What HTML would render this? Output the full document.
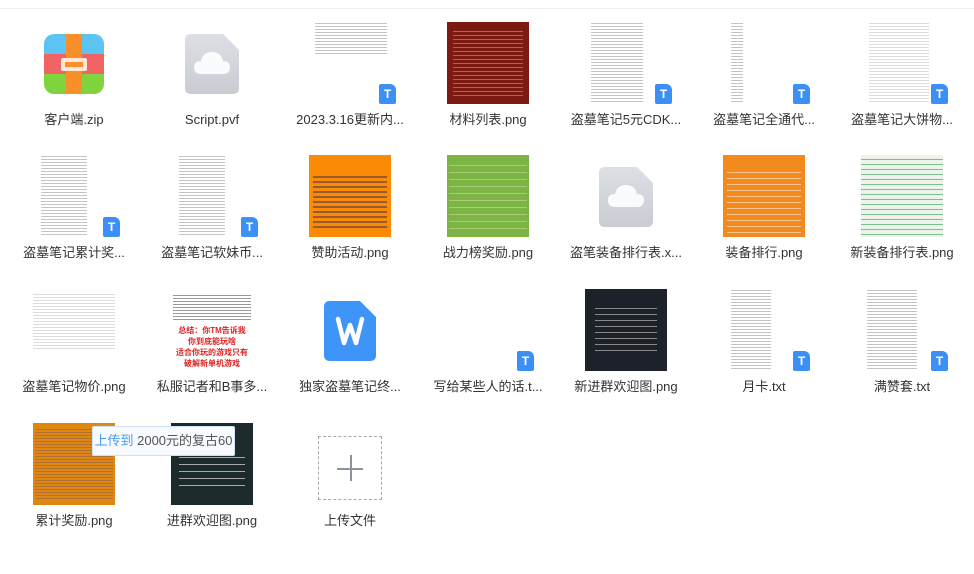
<!DOCTYPE html>
<html><head><meta charset="utf-8"><style>
body{margin:0;width:974px;height:574px;background:#fff;position:relative;overflow:hidden;font-family:"Liberation Sans","Noto Sans CJK SC",sans-serif}
.top{position:absolute;left:0;top:8px;width:974px;height:1px;background:#eceef2}
.c{position:absolute;width:138px;height:120px}
.t{position:absolute;left:28px;top:0;width:82px;height:82px;overflow:hidden}
.l{position:absolute;left:0;top:89px;width:138px;text-align:center;font-size:13px;color:#333;line-height:18px;white-space:nowrap}
.txt{background:repeating-linear-gradient(#fff 0 1px,#c4c4c4 1px 2px,#fff 2px 3px)}
.badge{position:absolute;left:346px;top:62px;width:17px;height:20px;background:#3b8ff5;border-radius:2px 6px 2px 2px;color:#fff;font-size:12px;font-weight:bold;text-align:center;line-height:20px}
.tip{position:absolute;left:92px;top:426px;width:141px;height:28px;border:1px solid #cfe3f8;background:#f7fafe;border-radius:2px;font-size:13px;line-height:28px;color:#555;text-align:center;white-space:nowrap}
</style></head><body>
<div class="top"></div>

<!-- row 0 -->
<div class="c" style="left:5px;top:22px">
 <div style="position:absolute;left:39px;top:12px;width:60px;height:60px;border-radius:10px;overflow:hidden">
  <div style="height:20px;background:#5cc4f2"></div><div style="height:20px;background:#f06464"></div><div style="height:20px;background:#7fd33c"></div>
  <div style="position:absolute;left:22px;top:0;width:16px;height:60px;background:#f7902a"></div>
  <div style="position:absolute;left:17px;top:24px;width:26px;height:13px;background:#fde8d8;border-radius:2px"></div>
  <div style="position:absolute;left:21px;top:28px;width:18px;height:5px;background:#f7902a"></div>
 </div>
 <div class="l">客户端.zip</div></div>
<div class="c" style="left:143px;top:22px">
 <svg style="position:absolute;left:42px;top:12px" width="54" height="60"><defs><linearGradient id="g" x1="0" y1="0" x2="0" y2="1"><stop offset="0" stop-color="#dcdfe4"/><stop offset="1" stop-color="#c9ccd3"/></linearGradient></defs><path d="M6 0H38L54 16V54Q54 60 48 60H6Q0 60 0 54V6Q0 0 6 0Z" fill="url(#g)"/><path d="M16 40Q9 40 9 33Q9 27 16 27Q18 18 27 18Q36 18 38 27Q45 27 45 33Q45 40 38 40Z" fill="#fafbfc"/></svg>
 <div class="l">Script.pvf</div></div>
<div class="c" style="left:281px;top:22px"><div class="t txt" style="top:0;height:34px;width:72px;left:34px"></div><div class="badge" style="left:98px">T</div><div class="l">2023.3.16更新内...</div></div>
<div class="c" style="left:419px;top:22px"><div class="t" style="background:#7a1a12"><div style="margin:6px 6px;height:68px;background:repeating-linear-gradient(#7a1a12 0 3px,#a76a4a 3px 4px)"></div></div><div class="l">材料列表.png</div></div>
<div class="c" style="left:557px;top:22px"><div class="t txt" style="left:34px;width:52px"></div><div class="badge" style="left:98px">T</div><div class="l">盗墓笔记5元CDK...</div></div>
<div class="c" style="left:695px;top:22px"><div class="t txt" style="left:36px;width:12px"></div><div class="badge" style="left:98px">T</div><div class="l">盗墓笔记全通代...</div></div>
<div class="c" style="left:833px;top:22px"><div class="t txt" style="left:36px;width:60px;opacity:.6"></div><div class="badge" style="left:98px">T</div><div class="l">盗墓笔记大饼物...</div></div>

<!-- row 1 -->
<div class="c" style="left:5px;top:155px"><div class="t txt" style="left:36px;width:46px"></div><div class="badge" style="left:98px">T</div><div class="l">盗墓笔记累计奖...</div></div>
<div class="c" style="left:143px;top:155px"><div class="t txt" style="left:36px;width:46px"></div><div class="badge" style="left:98px">T</div><div class="l">盗墓笔记软妹币...</div></div>
<div class="c" style="left:281px;top:155px"><div class="t" style="background:#fb8a05"><div style="margin:18px 4px 0;height:56px;background:repeating-linear-gradient(#fb8a05 0 3px,#9a5a30 3px 5px)"></div></div><div class="l">赞助活动.png</div></div>
<div class="c" style="left:419px;top:155px"><div class="t" style="background:#7db544"><div style="margin:4px 2px;height:70px;background:repeating-linear-gradient(#7db544 0 6px,#a9cc7a 6px 7px)"></div></div><div class="l">战力榜奖励.png</div></div>
<div class="c" style="left:557px;top:155px">
 <svg style="position:absolute;left:42px;top:12px" width="54" height="60"><path d="M6 0H38L54 16V54Q54 60 48 60H6Q0 60 0 54V6Q0 0 6 0Z" fill="url(#g)"/><path d="M16 40Q9 40 9 33Q9 27 16 27Q18 18 27 18Q36 18 38 27Q45 27 45 33Q45 40 38 40Z" fill="#fafbfc"/></svg>
 <div class="l">盗笔装备排行表.x...</div></div>
<div class="c" style="left:695px;top:155px"><div class="t" style="background:#f28a1d"><div style="margin:12px 4px 0;height:66px;background:repeating-linear-gradient(#f28a1d 0 5px,#f8c690 5px 6px)"></div></div><div class="l">装备排行.png</div></div>
<div class="c" style="left:833px;top:155px"><div class="t" style="background:repeating-linear-gradient(#eef3ec 0 4px,#7ac090 4px 5px)"></div><div class="l">新装备排行表.png</div></div>

<!-- row 2 -->
<div class="c" style="left:5px;top:289px"><div class="t txt" style="opacity:.6;top:4px;height:56px"></div><div class="l">盗墓笔记物价.png</div></div>
<div class="c" style="left:143px;top:289px"><div class="t" style="background:#fff"><div style="margin:4px 2px;height:28px;background:repeating-linear-gradient(#fff 0 2px,#999 2px 3px)"></div><div style="color:#d22;font-size:8px;font-weight:bold;text-align:center;line-height:11px;white-space:nowrap">总结：你TM告诉我<br>你到底能玩啥<br>适合你玩的游戏只有<br>破解新单机游戏</div></div><div class="l">私服记者和B事多...</div></div>
<div class="c" style="left:281px;top:289px">
 <svg style="position:absolute;left:43px;top:12px" width="52" height="60"><path d="M6 0H36L52 16V54Q52 60 46 60H6Q0 60 0 54V6Q0 0 6 0Z" fill="#3f95f7"/><path d="M14 18L20 42L26 24L32 42L38 18" stroke="#fff" stroke-width="4.5" fill="none" stroke-linejoin="round" stroke-linecap="round"/></svg>
 <div class="l">独家盗墓笔记终...</div></div>
<div class="c" style="left:419px;top:289px"><div class="badge" style="left:98px">T</div><div class="l">写给某些人的话.t...</div></div>
<div class="c" style="left:557px;top:289px"><div class="t" style="background:#1d222a"><div style="margin:14px 10px;height:48px;background:repeating-linear-gradient(#1d222a 0 5px,#888 5px 6px)"></div></div><div class="l">新进群欢迎图.png</div></div>
<div class="c" style="left:695px;top:289px"><div class="t txt" style="left:36px;width:40px"></div><div class="badge" style="left:98px">T</div><div class="l">月卡.txt</div></div>
<div class="c" style="left:833px;top:289px"><div class="t txt" style="left:34px;width:50px"></div><div class="badge" style="left:98px">T</div><div class="l">满赞套.txt</div></div>

<!-- row 3 -->
<div class="c" style="left:5px;top:423px"><div class="t" style="background:#e0870f"><div style="margin:4px 2px;height:74px;background:repeating-linear-gradient(#e0870f 0 2px,#b0703a 2px 3px)"></div></div><div class="l">累计奖励.png</div></div>
<div class="c" style="left:143px;top:423px"><div class="t" style="background:#1c2a2c"><div style="margin:28px 8px;height:36px;background:repeating-linear-gradient(#1c2a2c 0 6px,#aaa 6px 7px)"></div></div><div class="l">进群欢迎图.png</div></div>
<div class="c" style="left:281px;top:423px"><div style="position:absolute;left:37px;top:13px;width:62px;height:62px;border:1px dashed #a5a9b2"><div style="position:absolute;left:18px;top:31px;width:26px;height:1.5px;background:#8d939e"></div><div style="position:absolute;left:31px;top:18px;width:1.5px;height:26px;background:#8d939e"></div></div><div class="l">上传文件</div></div>

<div class="tip"><span style="color:#4a9be8">上传到</span> 2000元的复古60</div>
</body></html>
